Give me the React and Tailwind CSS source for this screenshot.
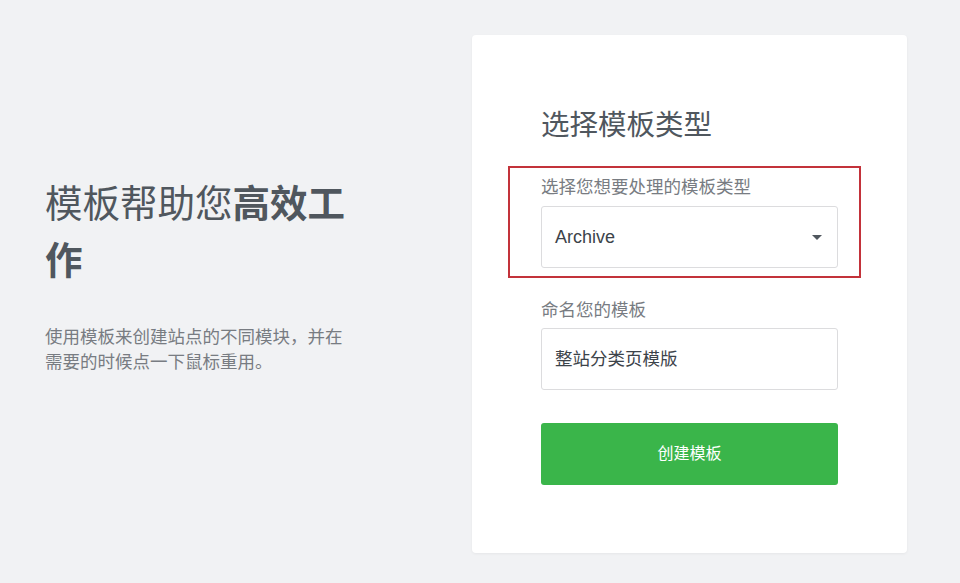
export default function App() {
  const font = { fontFamily: '"Liberation Sans", "Noto Sans CJK SC", sans-serif' };

  return (
    <div
      style={font}
      className="flex min-h-screen w-full items-center justify-between bg-[#f1f2f4] pb-[30px] pl-[45px] pr-[53px] pt-[35px]"
    >
      <div className="mb-[37px] w-[310px]">
        <h1 className="text-[37.5px] font-normal leading-[57px] text-[#50575e]">
          模板帮助您<strong className="font-bold">高效工作</strong>
        </h1>
        <p className="mt-[35px] text-[17.5px] leading-[25.5px] text-[#787c82]">
          使用模板来创建站点的不同模块，并在需要的时候点一下鼠标重用。
        </p>
      </div>

      <section className="w-[435px] rounded-[4px] bg-white px-[69px] pb-[68px] pt-[70px] shadow-[0_1px_3px_rgba(0,0,0,0.05)]">
        <h2 className="text-[28.5px] font-normal leading-[40px] text-[#50575e]">选择模板类型</h2>

        <div className="relative mt-[29px]">
          <div className="pointer-events-none absolute -bottom-[10px] -left-[33px] -right-[23px] -top-[8px] border-2 border-[#c3323a]" />
          <label className="mb-[6px] block text-[17.5px] leading-[26px] text-[#787c82]">
            选择您想要处理的模板类型
          </label>
          <div className="flex h-[62px] items-center justify-between rounded-[3px] border border-[#dcdcde] bg-white pl-[13px] pr-[15px]">
            <span className="text-[18px] text-[#3c434a]">Archive</span>
            <svg width="10" height="5" viewBox="0 0 10 5">
              <path d="M0 0h10L5 5z" fill="#50575e" />
            </svg>
          </div>
        </div>

        <label className="mb-[5px] mt-[29px] block text-[17.5px] leading-[26px] text-[#787c82]">
          命名您的模板
        </label>
        <div className="flex h-[62px] items-center rounded-[3px] border border-[#dcdcde] bg-white pl-[13px]">
          <span className="text-[17.5px] text-[#3c434a]">整站分类页模版</span>
        </div>

        <button className="mt-[33px] flex h-[62px] w-full items-center justify-center rounded-[3px] bg-[#3ab54a] text-[16px] text-white">
          创建模板
        </button>
      </section>
    </div>
  );
}
